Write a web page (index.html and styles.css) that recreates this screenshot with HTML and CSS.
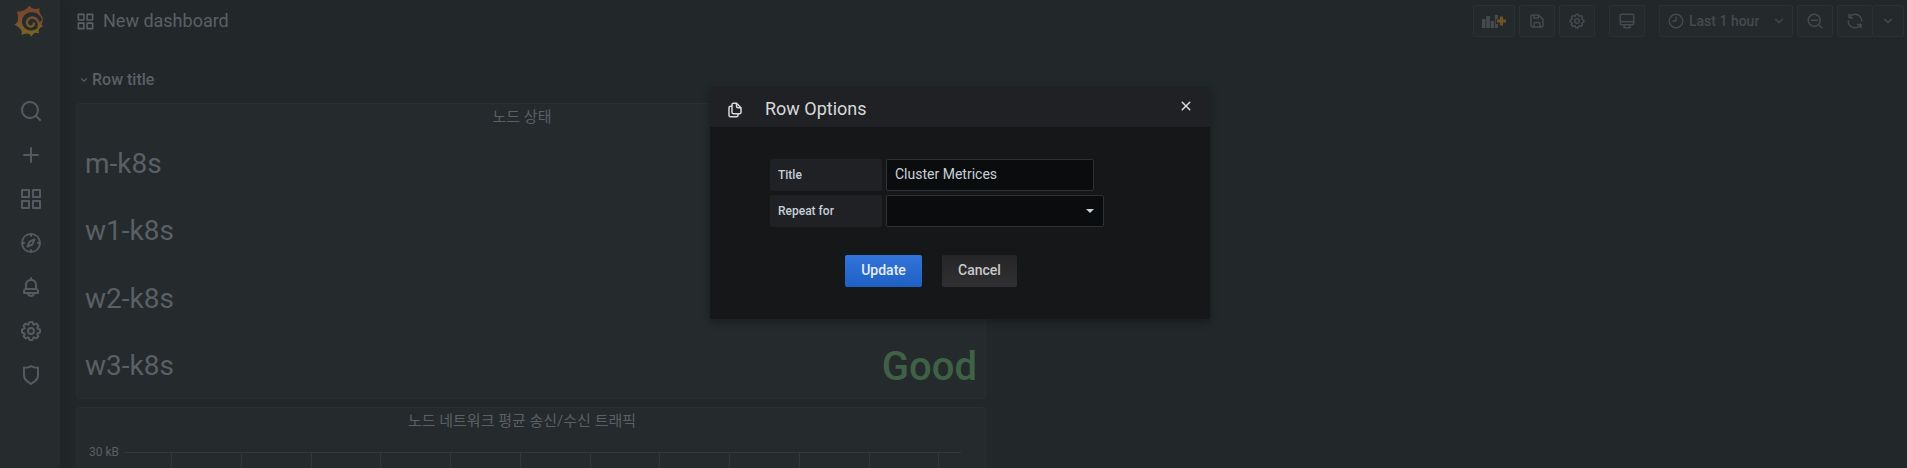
FILE: index.html
```
<!DOCTYPE html>
<html lang="ko">
<head>
<meta charset="utf-8">
<title>New dashboard</title>
<link rel="stylesheet" href="styles.css">
</head>
<body>
<svg class="defs" width="0" height="0">
<symbol id="search" viewBox="0 0 24 24"><path d="M21.71,20.29,18,16.61A9,9,0,1,0,16.61,18l3.68,3.68a1,1,0,0,0,1.42,0A1,1,0,0,0,21.71,20.29ZM11,18a7,7,0,1,1,7-7A7,7,0,0,1,11,18Z"/></symbol>
<symbol id="minus" viewBox="0 0 24 24"><path d="M21.71,20.29,18,16.61A9,9,0,1,0,16.61,18l3.68,3.68a1,1,0,0,0,1.42,0A1,1,0,0,0,21.71,20.29ZM11,18a7,7,0,1,1,7-7A7,7,0,0,1,11,18ZM15,10H7a1,1,0,0,0,0,2h8a1,1,0,0,0,0-2Z"/></symbol>
<symbol id="plus" viewBox="0 0 24 24"><path d="M19,11H13V5a1,1,0,0,0-2,0v6H5a1,1,0,0,0,0,2h6v6a1,1,0,0,0,2,0V13h6a1,1,0,0,0,0-2Z"/></symbol>
<symbol id="apps" viewBox="0 0 24 24"><path d="M10,13H3a1,1,0,0,0-1,1v7a1,1,0,0,0,1,1h7a1,1,0,0,0,1-1V14A1,1,0,0,0,10,13ZM9,20H4V15H9ZM21,2H14a1,1,0,0,0-1,1v7a1,1,0,0,0,1,1h7a1,1,0,0,0,1-1V3A1,1,0,0,0,21,2ZM20,9H15V4h5Zm1,4H14a1,1,0,0,0-1,1v7a1,1,0,0,0,1,1h7a1,1,0,0,0,1-1V14A1,1,0,0,0,21,13Zm-1,7H15V15h5ZM10,2H3A1,1,0,0,0,2,3v7a1,1,0,0,0,1,1h7a1,1,0,0,0,1-1V3A1,1,0,0,0,10,2ZM9,9H4V4H9Z"/></symbol>
<symbol id="compass" viewBox="0 0 24 24"><path d="M12,2A10,10,0,1,0,22,12,10,10,0,0,0,12,2Zm1,17.93V19a1,1,0,0,0-2,0v.93A8,8,0,0,1,4.07,13H5a1,1,0,0,0,0-2H4.07A8,8,0,0,1,11,4.07V5a1,1,0,0,0,2,0V4.07A8,8,0,0,1,19.93,11H19a1,1,0,0,0,0,2h.93A8,8,0,0,1,13,19.93ZM15.14,7.55l-5,2.12a1,1,0,0,0-.52.52l-2.12,5a1,1,0,0,0,.21,1.1,1,1,0,0,0,.7.3.93.93,0,0,0,.4-.09l5-2.12a1,1,0,0,0,.52-.52l2.12-5a1,1,0,0,0-1.31-1.31Zm-2.49,5.1-2.28,1,1-2.28,2.28-1Z"/></symbol>
<symbol id="bell" viewBox="0 0 24 24"><path d="M18,13.18V10a6,6,0,0,0-5-5.91V3a1,1,0,0,0-2,0V4.09A6,6,0,0,0,6,10v3.18A3,3,0,0,0,4,16v2a1,1,0,0,0,1,1H8.14a4,4,0,0,0,7.72,0H19a1,1,0,0,0,1-1V16A3,3,0,0,0,18,13.18ZM8,10a4,4,0,0,1,8,0v3H8Zm4,10a2,2,0,0,1-1.72-1h3.44A2,2,0,0,1,12,20Zm6-3H6V16a1,1,0,0,1,1-1H17a1,1,0,0,1,1,1Z"/></symbol>
<symbol id="cog" viewBox="0 0 24 24"><path d="M21.32,9.55l-1.89-.63.89-1.78A1,1,0,0,0,20.13,6L18,3.87a1,1,0,0,0-1.15-.19l-1.78.89-.63-1.89A1,1,0,0,0,13.5,2h-3a1,1,0,0,0-.95.68L8.92,4.57,7.14,3.68A1,1,0,0,0,6,3.87L3.87,6a1,1,0,0,0-.19,1.15l.89,1.78-1.89.63A1,1,0,0,0,2,10.5v3a1,1,0,0,0,.68.95l1.89.63-.89,1.78A1,1,0,0,0,3.87,18L6,20.13a1,1,0,0,0,1.15.19l1.78-.89.63,1.89a1,1,0,0,0,.95.68h3a1,1,0,0,0,.95-.68l.63-1.89,1.78.89A1,1,0,0,0,18,20.13L20.13,18a1,1,0,0,0,.19-1.15l-.89-1.78,1.89-.63A1,1,0,0,0,22,13.5v-3A1,1,0,0,0,21.32,9.55ZM20,12.78l-1.2.4A2,2,0,0,0,17.64,16l.57,1.14-1.1,1.1L16,17.64a2,2,0,0,0-2.79,1.16l-.4,1.2H11.22l-.4-1.2A2,2,0,0,0,8,17.64l-1.14.57-1.1-1.1L6.36,16A2,2,0,0,0,5.2,13.18L4,12.78V11.22l1.2-.4A2,2,0,0,0,6.36,8L5.79,6.89l1.1-1.1L8,6.36A2,2,0,0,0,10.82,5.2l.4-1.2h1.56l.4,1.2A2,2,0,0,0,16,6.36l1.14-.57,1.1,1.1L17.64,8a2,2,0,0,0,1.16,2.79l1.2.4ZM12,8a4,4,0,1,0,4,4A4,4,0,0,0,12,8Zm0,6a2,2,0,1,1,2-2A2,2,0,0,1,12,14Z"/></symbol>
<symbol id="shield" viewBox="0 0 24 24"><path d="M19.63,3.65a1,1,0,0,0-.84-.2,8,8,0,0,1-6.22-1.27,1,1,0,0,0-1.14,0A8,8,0,0,1,5.21,3.45a1,1,0,0,0-.84.2A1,1,0,0,0,4,4.43v7.45a9,9,0,0,0,3.77,7.33l3.65,2.6a1,1,0,0,0,1.16,0l3.65-2.6A9,9,0,0,0,20,11.88V4.43A1,1,0,0,0,19.63,3.65ZM18,11.88a7,7,0,0,1-2.93,5.7L12,19.77,8.93,17.58A7,7,0,0,1,6,11.88V5.58a10,10,0,0,0,6-1.39,10,10,0,0,0,6,1.39Z"/></symbol>
<symbol id="save" viewBox="0 0 24 24"><path d="M20.71,9.29l-6-6a1,1,0,0,0-.32-.21A1.09,1.09,0,0,0,14,3H6A3,3,0,0,0,3,6V18a3,3,0,0,0,3,3H18a3,3,0,0,0,3-3V10A1,1,0,0,0,20.71,9.29ZM9,5h4V7H9Zm6,14H9V16a1,1,0,0,1,1-1h4a1,1,0,0,1,1,1Zm4-1a1,1,0,0,1-1,1H17V16a3,3,0,0,0-3-3H10a3,3,0,0,0-3,3v3H6a1,1,0,0,1-1-1V6A1,1,0,0,1,6,5H7V8A1,1,0,0,0,8,9h6a1,1,0,0,0,1-1V6.41l4,4Z"/></symbol>
<symbol id="monitor" viewBox="0 0 24 24"><path d="M19,2H5A3,3,0,0,0,2,5V15a3,3,0,0,0,3,3H7.64l-.58,1a2,2,0,0,0,0,2,2,2,0,0,0,1.75,1h6.46A2,2,0,0,0,17,21a2,2,0,0,0,0-2l-.59-1H19a3,3,0,0,0,3-3V5A3,3,0,0,0,19,2ZM8.77,20,10,18H14l1.2,2ZM20,15a1,1,0,0,1-1,1H5a1,1,0,0,1-1-1V14H20Zm0-3H4V5A1,1,0,0,1,5,4H19a1,1,0,0,1,1,1Z"/></symbol>
<symbol id="clock" viewBox="0 0 24 24"><path d="M12,2A10,10,0,1,0,22,12,10,10,0,0,0,12,2Zm0,18a8,8,0,1,1,8-8A8,8,0,0,1,12,20ZM12,6a1,1,0,0,0-1,1v4H8a1,1,0,0,0,0,2h4a1,1,0,0,0,1-1V7A1,1,0,0,0,12,6Z"/></symbol>
<symbol id="sync" viewBox="0 0 24 24"><path d="M19.91,15.51H15.38a1,1,0,0,0,0,2h2.4A8,8,0,0,1,4,12a1,1,0,0,0-2,0,10,10,0,0,0,16.88,7.23V21a1,1,0,0,0,2,0V16.5A1,1,0,0,0,19.91,15.51ZM12,2A10,10,0,0,0,5.12,4.77V3a1,1,0,0,0-2,0V7.5a1,1,0,0,0,1,1h4.5a1,1,0,0,0,0-2H6.22A8,8,0,0,1,20,12a1,1,0,0,0,2,0A10,10,0,0,0,12,2Z"/></symbol>
<symbol id="angle" viewBox="0 0 24 24"><path d="M17,9.17a1,1,0,0,0-1.41,0L12,12.71,8.46,9.17a1,1,0,0,0-1.41,0,1,1,0,0,0,0,1.42l4.24,4.24a1,1,0,0,0,1.42,0L17,10.59A1,1,0,0,0,17,9.17Z"/></symbol>
<symbol id="copy" viewBox="0 0 24 24"><path d="M21,8.94a1.31,1.31,0,0,0-.06-.27l0-.09a1.07,1.07,0,0,0-.19-.28h0l-6-6h0a1.07,1.07,0,0,0-.28-.19.32.32,0,0,0-.09,0A.88.88,0,0,0,14.05,2H10A3,3,0,0,0,7,5V6H6A3,3,0,0,0,3,9V19a3,3,0,0,0,3,3h8a3,3,0,0,0,3-3V18h1a3,3,0,0,0,3-3V9S21,9,21,8.94ZM15,5.41,17.59,8H16a1,1,0,0,1-1-1ZM15,19a1,1,0,0,1-1,1H6a1,1,0,0,1-1-1V9A1,1,0,0,1,6,8H7v7a3,3,0,0,0,3,3h5Zm4-4a1,1,0,0,1-1,1H10a1,1,0,0,1-1-1V5a1,1,0,0,1,1-1h3V7a3,3,0,0,0,3,3h3Z"/></symbol>
<symbol id="times" viewBox="0 0 24 24"><path d="M13.41,12l4.3-4.29a1,1,0,1,0-1.42-1.42L12,10.59,7.71,6.29A1,1,0,0,0,6.29,7.71L10.59,12l-4.3,4.29a1,1,0,0,0,0,1.42,1,1,0,0,0,1.42,0L12,13.41l4.29,4.3a1,1,0,0,0,1.42,0,1,1,0,0,0,0-1.42Z"/></symbol>
</svg>

<div class="app">
  <nav class="sidebar">
    <svg class="logo" viewBox="0 0 30 32">
      <defs><linearGradient id="flame" gradientUnits="userSpaceOnUse" x1="0" y1="0" x2="0" y2="31"><stop offset="0" stop-color="#7b3f30"/><stop offset=".5" stop-color="#7a4f2a"/><stop offset="1" stop-color="#77691f"/></linearGradient></defs>
      <path fill="url(#flame)" d="M15.500 .5Q17 3 19.500 3.800Q22.500 4.200 25.500 3.300Q25 6 26 8.500Q29 11.500 28.800 15.500L27.500 19L28.800 21.500Q25.800 22.500 24.800 24.500Q24.500 26.500 25 28.500Q22.500 27.300 20.500 28Q18.500 29 17.500 31.500Q16 29 14 28.600Q11 28.500 7.500 30Q8.500 27 7.200 25Q4.500 21.500 .5 19.500Q3.500 17.500 4 15.500Q4.500 11 3 6.200Q7.500 7 10.500 5Q13.500 3.500 15.500 .5Z"/>
      <path class="logo-hole" d="M28.200 15.500C26.500 9.500 22 7 17 7.200A9.200 9.200 0 1 0 24.500 22C26.500 19 26 14.500 28.200 15.500Z"/>
      <path class="logo-swirl" d="M24.600 22.500C26.300 17.500 22.500 12.300 18 12.500C14.500 12.700 12.600 15.500 13 18.200C13.500 21 16 22 18 21.300C19.500 20.700 20 19.600 19.800 18.500"/>
    </svg>
    <div class="nav-items">
      <svg><use href="#search"/></svg>
      <svg><use href="#plus"/></svg>
      <svg><use href="#apps"/></svg>
      <svg><use href="#compass"/></svg>
      <svg><use href="#bell"/></svg>
      <svg><use href="#cog"/></svg>
      <svg><use href="#shield"/></svg>
    </div>
  </nav>

  <main class="main">
    <header class="toolbar">
      <svg class="title-icon"><use href="#apps"/></svg>
      <h1 class="title">New dashboard</h1>
      <div class="actions">
        <span class="btn add"><svg viewBox="0 0 24 14"><path d="M0 5h3.500v9H0zM4.300 2h3.500v12H4.300zM8.600 7h3.500v7H8.600zM12.900 1h3v4h-2v5h2v4h-3z"/><path class="add-plus" d="M18 2.500h3v3h3v3h-3v3h-3v-3h-3v-3h3z"/></svg></span>
        <span class="btn"><svg><use href="#save"/></svg></span>
        <span class="btn"><svg><use href="#cog"/></svg></span>
        <span class="btn tv"><svg><use href="#monitor"/></svg></span>
        <span class="btn time"><svg><use href="#clock"/></svg><span class="time-label">Last 1 hour</span><svg><use href="#angle"/></svg></span>
        <span class="btn"><svg><use href="#minus"/></svg></span>
        <span class="split"><span class="btn"><svg><use href="#sync"/></svg></span><span class="btn more"><svg><use href="#angle"/></svg></span></span>
      </div>
    </header>
    <div class="row-head"><svg><use href="#angle"/></svg><span>Row title</span></div>
    <section class="panel status">
      <h2 class="panel-title">노드 상태</h2>
      <div class="stats">
        <div class="stat"><span>m-k8s</span></div>
        <div class="stat"><span>w1-k8s</span></div>
        <div class="stat"><span>w2-k8s</span></div>
        <div class="stat"><span>w3-k8s</span><b>Good</b></div>
      </div>
    </section>
    <section class="panel graph">
      <h2 class="panel-title">노드 네트워크 평균 송신/수신 트래픽</h2>
      <div class="plot">
        <span class="axis">30 kB</span>
        <svg class="grid" viewBox="0 0 837 90"><path d="M0 .5H837M47.500 0V90M117.500 0V90M187.500 0V90M256.500 0V90M326.500 0V90M396.500 0V90M466.500 0V90M535.500 0V90M605.500 0V90M675.500 0V90M745.500 0V90M814.500 0V90"/></svg>
      </div>
    </section>
  </main>
</div>

<div class="modal">
  <header class="modal-head">
    <svg class="modal-icon"><use href="#copy"/></svg>
    <h2 class="modal-title">Row Options</h2>
    <svg class="close"><use href="#times"/></svg>
  </header>
  <div class="modal-body">
    <div class="field"><span class="label">Title</span><span class="input">Cluster Metrices</span></div>
    <div class="field"><span class="label">Repeat for</span><span class="input select"><i class="caret"></i></span></div>
    <div class="buttons"><span class="action primary">Update</span><span class="action">Cancel</span></div>
  </div>
</div>
</body>
</html>
```
FILE: styles.css
```
* { box-sizing: border-box; }
body { margin: 0; width: 1907px; height: 468px; overflow: hidden; background: #222729; color: #5a6065; font-family: Roboto, "Noto Sans CJK KR", sans-serif; font-size: 14px; }
h1, h2 { margin: 0; font-weight: 400; }
svg { display: block; flex: none; fill: currentColor; }
.defs { position: absolute; }
.app { display: flex; height: 468px; overflow: hidden; }
.sidebar { flex: none; width: 60px; background: #262b2d; box-shadow: 0 0 8px rgba(28, 30, 32, .6); color: #545a5f; }
.logo { width: 30px; height: 32px; margin: 5px 0 0 14px; }
.logo-hole { fill: #262b2d; }
.logo-swirl { fill: none; stroke: url(#flame); stroke-width: 2.3; stroke-linecap: round; }
.nav-items { display: flex; flex-direction: column; align-items: center; gap: 20px; margin-top: 62px; padding-left: 2px; }
.nav-items svg { width: 24px; height: 24px; }
.main { width: 1847px; padding-left: 16px; }
.toolbar { display: flex; align-items: center; height: 42px; padding-right: 3px; }
.title-icon { width: 19px; height: 19px; margin: 0 8px 0 0; }
.title { font-size: 18px; line-height: 24px; }
.actions { display: flex; gap: 4px; margin-left: auto; color: #454a4e; }
.btn { display: flex; align-items: center; justify-content: center; width: 36px; height: 32px; border: 1px solid #2b3032; border-radius: 2px; background: #24292b; }
.btn svg { width: 18px; height: 18px; }
.btn.add { width: 42px; }
.add svg { width: 24px; height: 14px; }
.add-plus { fill: #725326; }
.btn.tv { margin: 0 10px; }
.btn.time { width: 134px; justify-content: flex-start; padding-left: 7px; }
.time-label { width: 71px; margin: 0 10px 0 4px; font-weight: 500; line-height: 20px; margin-top: -1px; white-space: nowrap; }
.split { display: flex; }
.btn.more { width: 32px; margin-left: -1px; }
.row-head { display: flex; align-items: center; height: 61px; padding: 26px 0 12px 1px; font-size: 16px; font-weight: 500; line-height: 24px; }
.row-head svg { width: 14px; height: 14px; margin-right: 1px; }
.panel { width: 910px; border: 1px solid #292e30; border-radius: 3px; background: #252a2c; }
.status { height: 296px; }
.panel-title { height: 28px; padding-right: 18px; font-size: 15px; line-height: 26px; text-align: center; }
.stats { display: flex; flex-direction: column; margin-top: -2px; padding: 0 8px; }
.stat { display: flex; align-items: center; justify-content: space-between; height: 67.300px; font-size: 28px; }
.stat b { margin-top: 1px; color: #3f6146; font-size: 40px; font-weight: 500; }
.graph { height: 150px; margin-top: 8px; }
.plot { display: flex; padding: 9px 0 0 12px; }
.axis { width: 35px; font-size: 12px; line-height: 14px; }
.grid { width: 837px; height: 90px; margin-top: 7px; fill: none; stroke: #323739; }
.modal { position: absolute; left: 710px; top: 87px; width: 500px; height: 232px; background: #161719; box-shadow: 0 3px 7px rgba(0, 0, 0, .3); color: #d8d9da; }
.modal-head { display: flex; align-items: center; height: 40px; background: #202124; }
.modal-icon { width: 18px; height: 18px; margin: 6px 21px 0 16px; }
.modal-title { margin-top: 4px; font-size: 18px; line-height: 24px; }
.close { width: 18px; height: 18px; margin: 0 15px 2px auto; }
.modal-body { padding: 32px 0 0 60px; }
.field { display: flex; gap: 4px; margin-bottom: 4px; }
.label { width: 112px; height: 32px; padding-left: 8px; border-radius: 2px; background: #202124; color: #c7d0d9; font-size: 12px; font-weight: 500; line-height: 32px; }
.input { display: flex; align-items: center; width: 208px; height: 32px; padding: 0 8px 2px; border: 1px solid #2c3235; border-radius: 2px; background: #0b0c0e; color: #c7d0d9; }
.select { width: 218px; justify-content: flex-end; padding: 0 9px 0 0; }
.caret { border: solid transparent; border-width: 4px 4px 0; border-top-color: #c7d0d9; }
.buttons { display: flex; gap: 20px; padding: 24px 0 0 75px; }
.action { width: 75px; height: 32px; border-radius: 2px; background: linear-gradient(#262628, #303032); color: #c8c9ca; font-weight: 500; line-height: 31px; text-align: center; }
.primary { width: 77px; background: linear-gradient(#3274d9, #1f60c4); color: #e9edf5; }
```
